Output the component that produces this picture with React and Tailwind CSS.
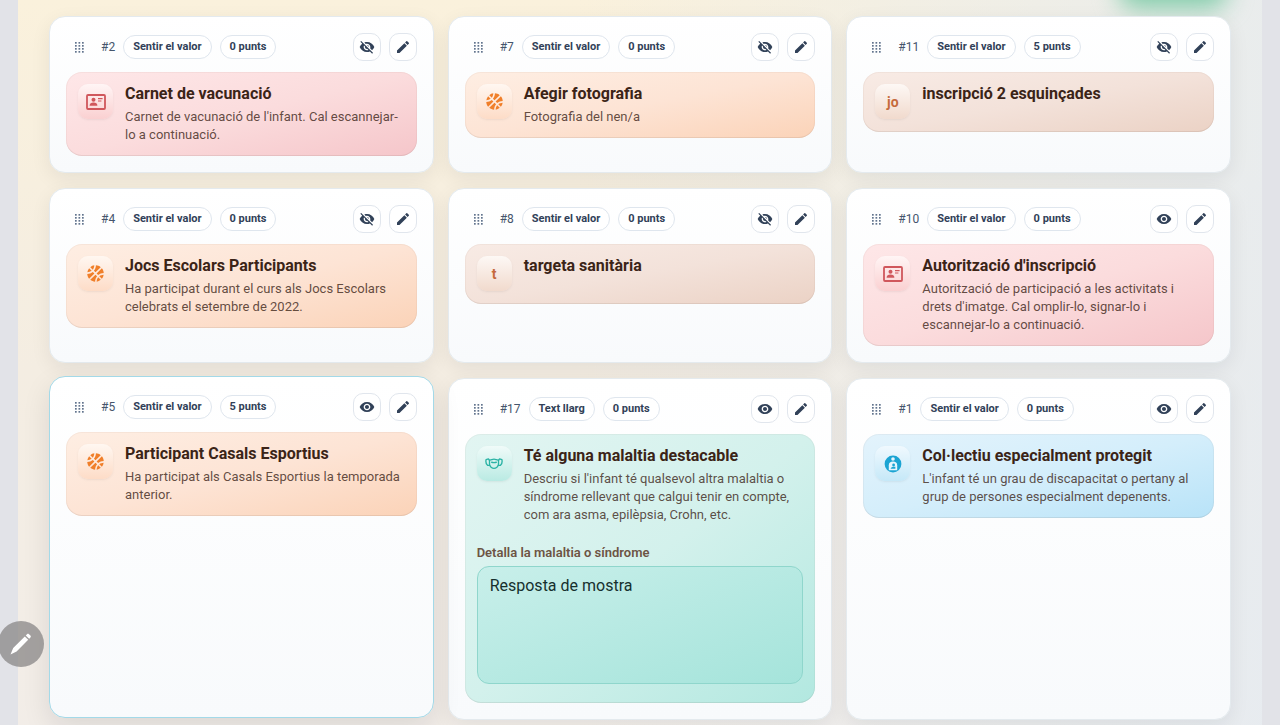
import React from 'react';
import { FaBasketballBall } from 'react-icons/fa';
import { MdVisibility, MdVisibilityOff, MdEdit } from 'react-icons/md';

const themes = {
  red: {
    panel: 'from-[#fee7e8] via-[#fbdcdd] to-[#f5c6ca]',
    tile: 'from-[#fff5f5] to-[#fad0d1] text-[#d0575c]',
  },
  orange: {
    panel: 'from-[#feeee3] via-[#fde4d5] to-[#fbd3b8]',
    tile: 'from-[#fff7f1] to-[#fddcc7] text-[#f07f2a]',
  },
  brown: {
    panel: 'from-[#f8ebe5] via-[#f3e2da] to-[#ebd2c5]',
    tile: 'from-[#fdf8f5] to-[#f1dacd] text-[#c56a3c]',
  },
  teal: {
    panel: 'from-[#e2f5f2] via-[#d3f1ec] to-[#b2e8e0]',
    tile: 'from-[#f0fbf9] to-[#b9eae3] text-[#2bb3a5]',
  },
  blue: {
    panel: 'from-[#e3f3fc] via-[#d4eefb] to-[#b8e3f8]',
    tile: 'from-[#f0f9fe] to-[#c5e8f8] text-[#1ba4d3]',
  },
};

const items = [
  { id: 2, type: 'Sentir el valor', points: 0, hidden: true, theme: 'red', icon: 'card', title: 'Carnet de vacunació', text: "Carnet de vacunació de l'infant. Cal escannejar-lo a continuació." },
  { id: 7, type: 'Sentir el valor', points: 0, hidden: true, theme: 'orange', icon: 'ball', title: 'Afegir fotografia', text: 'Fotografia del nen/a' },
  { id: 11, type: 'Sentir el valor', points: 5, hidden: true, theme: 'brown', initials: 'jo', title: 'inscripció 2 esquinçades' },
  { id: 4, type: 'Sentir el valor', points: 0, hidden: true, theme: 'orange', icon: 'ball', title: 'Jocs Escolars Participants', text: 'Ha participat durant el curs als Jocs Escolars celebrats el setembre de 2022.' },
  { id: 8, type: 'Sentir el valor', points: 0, hidden: true, theme: 'brown', initials: 't', title: 'targeta sanitària' },
  { id: 10, type: 'Sentir el valor', points: 0, theme: 'red', icon: 'card', title: "Autorització d'inscripció", text: "Autorització de participació a les activitats i drets d'imatge. Cal omplir-lo, signar-lo i escannejar-lo a continuació." },
  { id: 5, type: 'Sentir el valor', points: 5, active: true, theme: 'orange', icon: 'ball', title: 'Participant Casals Esportius', text: 'Ha participat als Casals Esportius la temporada anterior.' },
  { id: 17, type: 'Text llarg', points: 0, theme: 'teal', icon: 'mask', title: 'Té alguna malaltia destacable', text: "Descriu si l'infant té qualsevol altra malaltia o síndrome rellevant que calgui tenir en compte, com ara asma, epilèpsia, Crohn, etc.", field: 'Detalla la malaltia o síndrome' },
  { id: 1, type: 'Sentir el valor', points: 0, theme: 'blue', icon: 'care', title: 'Col·lectiu especialment protegit', text: "L'infant té un grau de discapacitat o pertany al grup de persones especialment depenents." },
];

const CardIcon = () => (
  <svg viewBox="0 0 20 16" className="h-4 w-5" fill="currentColor">
    <rect x="1" y="1" width="18" height="14" rx="1" fill="none" stroke="currentColor" strokeWidth="1.8" />
    <circle cx="7.5" cy="5.8" r="2" />
    <path d="M3.6 11.8c0-2.2 1.6-3.2 3.9-3.2s3.9 1 3.9 3.2z" />
    <path d="M12 4h4.6v1.2H12zM12 6.4h3.4v1.2H12z" />
  </svg>
);

const BallIcon = () => <FaBasketballBall size={17} />;

const MaskIcon = () => (
  <svg viewBox="0 0 20 14" className="h-[13px] w-[18px]" fill="none" stroke="currentColor" strokeWidth="1.5" strokeLinejoin="round" strokeLinecap="round">
    <path d="M5 3.2c2 .2 3-1 5-1s3 1.2 5 1v4.6c0 2.6-3 4.6-5 4.6s-5-2-5-4.6z" />
    <path d="M5 3.6 3.8 1.8 1.2 2.6c-.6 3 0 5 1.6 6.4L5.4 9M15 3.6l1.2-1.8 2.6.8c.6 3 0 5-1.6 6.4L14.6 9M7.4 5.6c1.8.6 3.4.6 5.2 0" />
  </svg>
);

const CareIcon = () => (
  <svg viewBox="0 0 18 18" className="h-[18px] w-[18px]">
    <circle cx="9" cy="9" r="8.4" fill="currentColor" />
    <g fill="#e6f5fd">
      <circle cx="9" cy="4" r="1.8" />
      <path d="M9 6.6c2.6 0 4.2 1.4 4.2 3.600v5H4.8v-5c0-2.2 1.600-3.600 4.200-3.600z" />
    </g>
    <circle cx="9.6" cy="10" r="1.4" fill="currentColor" />
    <path d="M6.6 13.8c.6-1.4 1.6-2 3-2h1.8v2z" fill="currentColor" />
  </svg>
);

const icons = { card: CardIcon, ball: BallIcon, mask: MaskIcon, care: CareIcon };

const DragHandle = () => (
  <button type="button" aria-label="Mou" className="flex h-7 w-[27px] cursor-grab items-center justify-center text-slate-500">
    <svg viewBox="0 0 9 11" className="h-[11px] w-[9px]" fill="currentColor">
      {[0, 3, 6, 9].map((y) => [0, 3.5, 7].map((x) => <rect key={`${x}-${y}`} x={x} y={y} width="1.7" height="1.7" />))}
    </svg>
  </button>
);

const Pill = ({ children }) => (
  <span className="flex h-6 items-center rounded-full border border-[#dfe6ee] bg-white px-[9px] text-[11px] font-bold text-slate-700">
    {children}
  </span>
);

const IconButton = ({ label, children }) => (
  <button type="button" aria-label={label} className="flex h-7 w-7 items-center justify-center rounded-[10px] border border-[#e1e6ed] bg-white text-slate-700">
    {children}
  </button>
);

const FieldCard = ({ item }) => {
  const theme = themes[item.theme];
  const Icon = icons[item.icon];

  return (
    <article
      className={`flex flex-col gap-[11px] rounded-2xl border bg-linear-to-b from-white to-[#f8fafc] p-4 ${
        item.active
          ? '-translate-y-0.5 border-[#a3d9e8] shadow-[0_10px_28px_rgba(15,23,42,0.10)]'
          : 'border-[#e4eaee] shadow-[0_6px_20px_rgba(15,23,42,0.07)]'
      }`}
    >
      <header className="flex items-center justify-between">
        <div className="flex items-center gap-2">
          <DragHandle />
          <span className="text-xs text-slate-600">#{item.id}</span>
          <Pill>{item.type}</Pill>
          <Pill>{item.points} punts</Pill>
        </div>
        <div className="flex gap-2">
          <IconButton label={item.hidden ? 'Mostra' : 'Amaga'}>
            {item.hidden ? <MdVisibilityOff size={16} /> : <MdVisibility size={16} />}
          </IconButton>
          <IconButton label="Edita">
            <MdEdit size={16} />
          </IconButton>
        </div>
      </header>

      <section className={`min-h-[60px] rounded-2xl bg-linear-to-br p-3 shadow-[inset_0_0_0_1px_rgba(120,70,50,0.05),inset_0_-1px_0_rgba(60,60,60,0.06)] ${theme.panel}`}>
        <div className="flex gap-3">
          <div className={`flex h-[35px] w-[35px] shrink-0 items-center justify-center rounded-[10px] bg-linear-to-b text-sm font-bold shadow-sm shadow-black/5 ${theme.tile}`}>
            {Icon ? <Icon /> : item.initials}
          </div>
          <div className="min-w-0">
            <h3 className="text-base leading-5 font-bold text-[#3b2417]">{item.title}</h3>
            {item.text && <p className="mt-1 text-[13px] leading-[18px] text-[#3b2417]/80">{item.text}</p>}
          </div>
        </div>
        {item.field && (
          <div className="pt-[19px] pb-[7px]">
            <label htmlFor="resposta" className="block text-[13px] leading-5 font-semibold text-[#6d5444]">{item.field}</label>
            <textarea
              id="resposta"
              defaultValue="Resposta de mostra"
              className="mt-[3px] block h-[118px] w-full resize-none rounded-xl border border-[#8fd6cc] bg-linear-to-br from-[#c8efea] to-[#a5e4db] px-3 py-[7px] text-base text-[#16302e]"
            />
          </div>
        )}
      </section>
    </article>
  );
};

export default function App() {
  return (
    <div className="h-screen overflow-hidden bg-[#e2e3e8] px-[18px] font-['Roboto','Noto_Sans',sans-serif]">
      <main className="relative bg-[linear-gradient(to_right,transparent_45%,rgba(228,235,242,0.75)),linear-gradient(to_bottom,#faf1dc,#f4ede2_50%,#f2ede8)] px-[31px] pt-4 pb-4">
        <div className="absolute -top-7 right-[34px] h-9 w-[110px] rounded-full bg-[#7fcba8] blur-md" />
        <div className="relative grid grid-cols-3 gap-x-[14px] gap-y-[15px]">
          {items.map((item) => (
            <FieldCard key={item.id} item={item} />
          ))}
        </div>
      </main>
      <button type="button" aria-label="Edita la pàgina" className="fixed bottom-[58px] -left-[2px] flex h-[46px] w-[46px] items-center justify-center rounded-full bg-[#8e8c8c]/80 text-white">
        <svg viewBox="0 0 24 24" className="h-6 w-6" fill="currentColor">
          <path d="M1.5 22.5 4.2 16 15.8 4.4l3.4 3.4L7.6 19.4zM16.8 3.4l1.2-1.2c.6-.6 1.4-.6 2 0l1.400 1.400c.6.6.6 1.400 0 2l-1.200 1.200z" />
        </svg>
      </button>
    </div>
  );
}
